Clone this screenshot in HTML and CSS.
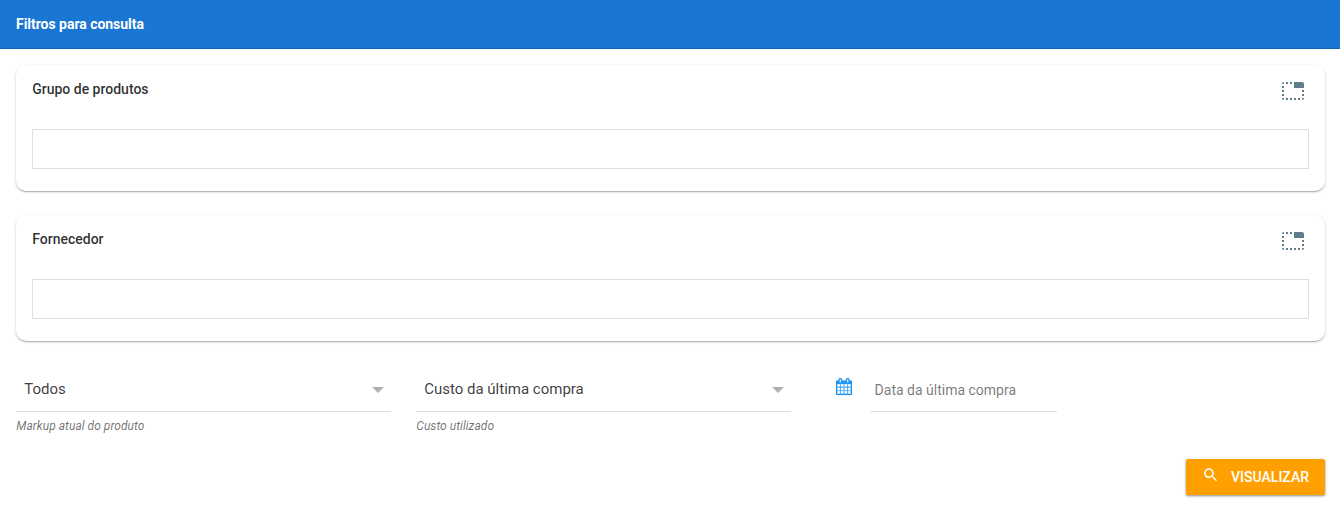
FILE: index.html
```html
<!DOCTYPE html>
<html lang="pt-BR">
<head>
<meta charset="utf-8">
<title>Filtros para consulta</title>
<link rel="stylesheet" href="styles.css">
</head>
<body>
<svg class="symbols" aria-hidden="true">
  <symbol id="tab" viewBox="0 0 24 24"><path d="M1 9h2V7H1v2zm0 4h2v-2H1v2zm0-8h2V3c-1.1 0-2 .9-2 2zm8 16h2v-2H9v2zm-8-4h2v-2H1v2zm2 4v-2H1c0 1.1.9 2 2 2zM21 3h-8v6h10V5c0-1.1-.9-2-2-2zm0 14h2v-2h-2v2zM9 5h2V3H9v2zM5 21h2v-2H5v2zM5 5h2V3H5v2zm16 16c1.1 0 2-.9 2-2h-2v2zm0-8h2v-2h-2v2zm-8 8h2v-2h-2v2zm4 0h2v-2h-2v2z"/></symbol>
</svg>
<header class="toolbar"><h1 class="toolbar-title">Filtros para consulta</h1></header>
<main class="content">
  <section class="card">
    <div class="card-head"><h2 class="card-title">Grupo de produtos</h2><svg class="tab-icon"><use href="#tab"/></svg></div>
    <div class="chips"></div>
  </section>
  <section class="card">
    <div class="card-head"><h2 class="card-title">Fornecedor</h2><svg class="tab-icon"><use href="#tab"/></svg></div>
    <div class="chips"></div>
  </section>
  <div class="fields">
    <div class="field">
      <div class="select"><span>Todos</span><i class="arrow"></i></div>
      <div class="hint">Markup atual do produto</div>
    </div>
    <div class="field">
      <div class="select"><span>Custo da última compra</span><i class="arrow"></i></div>
      <div class="hint">Custo utilizado</div>
    </div>
    <div class="date">
      <svg class="calendar" viewBox="0 0 1664 1792" preserveAspectRatio="none"><path d="M128 1664h288v-288h-288v288zm352 0h320v-288h-320v288zm-352-352h288v-320h-288v320zm352 0h320v-320h-320v320zm-352-384h288v-288h-288v288zm736 736h320v-288h-320v288zm-384-736h320v-288h-320v288zm768 736h288v-288h-288v288zm-384-352h320v-320h-320v320zm-352-864v-288q0-13-9.5-22.5t-22.5-9.5h-64q-13 0-22.5 9.5t-9.5 22.5v288q0 13 9.5 22.5t22.5 9.5h64q13 0 22.5-9.5t9.5-22.5zm736 864h288v-320h-288v320zm-384-384h320v-288h-320v288zm384 0h288v-288h-288v288zm32-480v-288q0-13-9.5-22.5t-22.5-9.5h-64q-13 0-22.5 9.5t-9.5 22.5v288q0 13 9.5 22.5t22.5 9.5h64q13 0 22.5-9.5t9.5-22.5zm384-64v1280q0 52-38 90t-90 38h-1408q-52 0-90-38t-38-90v-1280q0-52 38-90t90-38h128v-96q0-66 47-113t113-47h64q66 0 113 47t47 113v96h384v-96q0-66 47-113t113-47h64q66 0 113 47t47 113v96h128q52 0 90 38t38 90z"/></svg>
      <div class="date-input">Data da última compra</div>
    </div>
  </div>
  <div class="actions">
    <button class="submit" type="button">
      <svg class="search" viewBox="0 0 24 24"><path d="M15.5 14h-.79l-.28-.27C15.41 12.59 16 11.11 16 9.5 16 5.91 13.09 3 9.5 3S3 5.91 3 9.5 5.91 16 9.5 16c1.61 0 3.09-.59 4.23-1.57l.27.28v.79l5 4.99L20.49 19l-4.99-5zm-6 0C7.01 14 5 11.99 5 9.5S7.01 5 9.5 5 14 7.01 14 9.5 11.99 14 9.5 14z"/></svg>
      <span>VISUALIZAR</span>
    </button>
  </div>
</main>
</body>
</html>
```
FILE: styles.css
```css
* { box-sizing: border-box; }
body { margin: 0; background: #fff; font-family: Roboto, sans-serif; color: rgba(0, 0, 0, .82); }
.symbols { display: none; }
.toolbar { height: 49px; padding: 0 16px; background: #1976d2; border-bottom: 1px solid #1565b4; display: flex; align-items: center; }
.toolbar-title { margin: 0; font-size: 14px; font-weight: 700; line-height: 20px; letter-spacing: -.03px; color: #fff; }
.content { padding: 16px 15px 16px 16px; }
.card { height: 126px; margin-bottom: 24px; padding: 14px 16px 0; border-radius: 10px; background: #fff; box-shadow: 0 1px 3px rgba(0, 0, 0, .18), 0 1px 1px rgba(0, 0, 0, .12), 0 2px 1px -1px rgba(0, 0, 0, .1); }
.card-head { height: 50px; display: flex; justify-content: space-between; }
.card-title { margin: 0; padding-left: .2px; font-size: 14px; font-weight: 500; line-height: 20px; }
.tab-icon { width: 24px; height: 24px; margin-right: 4px; fill: #607d8b; }
.chips { height: 40px; border: 1px solid #e0e0e0; }
.fields { display: flex; height: 94px; padding-top: 1px; }
.field { width: 375px; margin-right: 25px; }
.select { height: 46px; padding: 12px 7.5px 0 8.2px; display: flex; justify-content: space-between; border-bottom: 1px solid #e0e0e0; font-size: 15px; line-height: 22px; color: rgba(0, 0, 0, .77); }
.arrow { width: 0; height: 0; margin-top: 9px; border: 6px solid transparent; border-top-color: #afafaf; border-bottom: 0; }
.hint { margin-top: 5px; padding-left: .3px; font-size: 12px; line-height: 18px; letter-spacing: .03px; font-style: italic; color: rgba(0, 0, 0, .57); }
.date { display: flex; padding-left: 19.5px; }
.calendar { width: 16px; height: 17px; margin: 12px 18.5px 0 0; fill: #2196f3; stroke: #2196f3; stroke-width: 18px; overflow: visible; }
.date-input { width: 187px; height: 46px; padding: 14px 4px 0 4.6px; border-bottom: 1px solid #e0e0e0; font-size: 14px; line-height: 20px; color: rgba(0, 0, 0, .54); }
.actions { display: flex; justify-content: flex-end; }
.submit { width: 139px; height: 36px; padding: 0 16px; border: 0; border-radius: 2px; display: flex; align-items: center; background: #ffa000; color: #fff; font: 500 14px/36px Roboto, sans-serif; box-shadow: 0 1px 3px rgba(0, 0, 0, .3), 0 1px 2px rgba(0, 0, 0, .2); }
.search { width: 18px; height: 18px; margin: -4px 11.4px 0 0; fill: #fff; }
```
